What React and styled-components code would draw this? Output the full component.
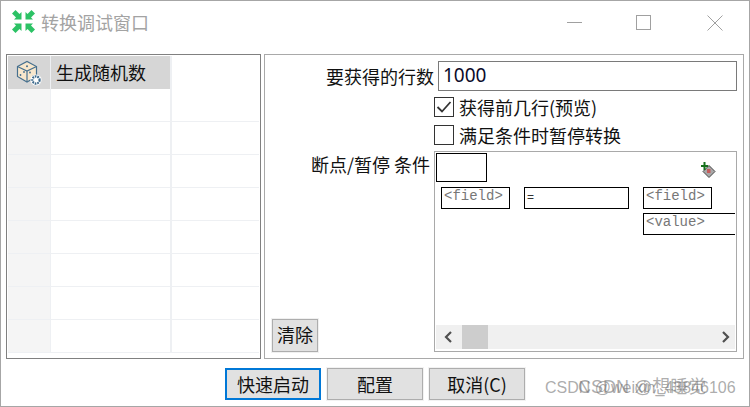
import styled, { createGlobalStyle } from "styled-components";

const CJK = `"Noto Sans CJK SC", "Noto Sans", sans-serif`;

const GlobalStyle = createGlobalStyle`
  html, body {
    margin: 0;
    padding: 0;
    background: #fff;
  }
  * {
    box-sizing: border-box;
  }
`;

const Window = styled.div`
  position: relative;
  width: 750px;
  height: 407px;
  border: 1px solid #a6a6a6;
  background: #fff;
  overflow: hidden;
  font-family: ${CJK};
  font-size: 18px;
  color: #111;
`;

const TitleBar = styled.div`
  height: 53px;
  display: flex;
  align-items: flex-start;
  padding: 8px 20px 0 10px;
`;

const TitleText = styled.div`
  margin-left: 5px;
  line-height: 27px;
  color: #a3a3a3;
  flex: 1;
`;

const WinButtons = styled.div`
  display: flex;
  gap: 53px;
  padding-top: 6px;
  margin-right: 6px;
`;

const Body = styled.div`
  display: flex;
  gap: 3px;
  padding-left: 5px;
`;

const LeftPanel = styled.div`
  width: 255px;
  height: 305px;
  border: 1px solid #808080;
  padding: 1px;
  overflow: hidden;
`;

const StepRow = styled.div`
  display: grid;
  grid-template-columns: 42px 1px 119px 2px 1fr;
  height: 33px;
  border-bottom: 1px solid #eef0f3;
`;

const Cell = styled.div`
  background: ${(p) => p.$bg || "#fff"};
  display: flex;
  align-items: center;
  justify-content: center;
  line-height: 32px;
`;

const NameCell = styled(Cell)`
  justify-content: flex-start;
  padding: 0 0 2px 5px;
`;

const ColLine = styled.div`
  background: #eef0f3;
`;

const RightPanel = styled.div`
  width: 480px;
  height: 305px;
  border: 1px solid #a9a9a9;
  display: grid;
  grid-template-columns: 169px 303px;
  grid-template-rows: 36px 28px 26px 1fr;
  padding: 6px 0 6px 0;
`;

const RowLabel = styled.div`
  text-align: right;
  line-height: 31px;
`;

const RowsInput = styled.div`
  height: 30px;
  width: 299px;
  margin-left: 4px;
  border: 1px solid #7a7a7a;
  font-family: "Noto Sans", sans-serif;
  font-size: 19px;
  line-height: 27px;
  padding-left: 4px;
  color: #0b0b2a;
`;

const CheckRow = styled.div`
  grid-column: 2;
  display: flex;
  align-items: flex-start;
  gap: 5px;
  line-height: 20px;
  height: 20px;
`;

const CheckBox = styled.div`
  width: 20px;
  height: 20px;
  border: 1px solid #333;
  display: flex;
  align-items: center;
  justify-content: center;
`;

const ConditionSide = styled.div`
  display: flex;
  flex-direction: column;
  justify-content: space-between;
  padding-left: 7px;
  height: 201px;
`;

const ConditionLabel = styled(RowLabel)`
  padding-right: 4px;
  line-height: 27px;
`;

const ClearButton = styled.div`
  width: 46px;
  height: 33px;
  background: #e1e1e1;
  border: 1px solid #adadad;
  outline: 1px solid #f0f0f0;
  text-align: center;
  line-height: 29px;
`;

const ConditionPanel = styled.div`
  width: 303px;
  height: 201px;
  border: 1px solid #a9a9a9;
  display: flex;
  flex-direction: column;
  padding: 1px 1px 2px;
  overflow: hidden;
`;

const ConditionTop = styled.div`
  display: flex;
  justify-content: space-between;
  align-items: flex-start;
  padding-right: 19px;
`;

const NameBox = styled.div`
  width: 51px;
  height: 29px;
  border: 1px solid #000;
`;

const AddIcon = styled.div`
  margin-top: 4px;
`;

const ConditionGrid = styled.div`
  display: grid;
  grid-template-columns: 69px 105px 92px;
  column-gap: 14px;
  row-gap: 4px;
  padding: 4px 0 0 5px;
  flex: 1;
  align-content: start;
`;

const FieldBox = styled.div`
  grid-column: ${(p) => p.$col || "auto"};
  height: 22px;
  border: 1px solid #000;
  border-right: ${(p) => (p.$open ? "0" : "1px solid #000")};
  width: ${(p) => p.$w || "auto"};
  font-family: "Liberation Mono", monospace;
  font-size: 14px;
  line-height: 17px;
  padding-left: 2px;
  color: #777;
  white-space: pre;
`;

const OpBox = styled(FieldBox)`
  color: #333;
  font-family: "Liberation Sans", sans-serif;
  font-size: 12px;
  line-height: 18px;
`;

const HScroll = styled.div`
  height: 24px;
  background: #f0f0f0;
  display: flex;
  align-items: center;
  justify-content: space-between;
  position: relative;
  padding: 0 5px 0 8px;
`;

const Thumb = styled.div`
  position: absolute;
  left: 26px;
  top: 0;
  width: 26px;
  height: 24px;
  background: #cdcdcd;
`;

const Footer = styled.div`
  display: flex;
  gap: 6px;
  padding: 9px 0 0 224px;
`;

const ActionButton = styled.div`
  width: 96px;
  height: 32px;
  background: #e1e1e1;
  border: ${(p) => (p.$primary ? "2px solid #0078d7" : "1px solid #adadad")};
  outline: ${(p) => (p.$primary ? "0" : "1px solid #f2f2f2")};
  text-align: center;
  line-height: ${(p) => (p.$primary ? "28px" : "30px")};
`;

const Watermark = styled.div`
  position: absolute;
  top: ${(p) => p.$top}px;
  left: ${(p) => p.$left}px;
  font-family: "Liberation Sans", ${CJK};
  font-size: ${(p) => p.$size}px;
  line-height: 22px;
  color: rgba(120, 120, 120, 0.62);
  white-space: nowrap;
`;

const CloseSvg = styled.svg`
  margin-left: 2px;
`;

const ArrowsIcon = () => (
  <svg width="25" height="25" viewBox="0 0 25 25" fill="#2cc265">
    <path d="M1 4.5 L4.5 1 L8.5 5 L10.5 3 L10.5 10.5 L3 10.5 L5 8.5 Z" />
    <path d="M24 4.5 L20.5 1 L16.5 5 L14.5 3 L14.5 10.5 L22 10.5 L20 8.5 Z" />
    <path d="M1 20.5 L4.5 24 L8.5 20 L10.5 22 L10.5 14.5 L3 14.5 L5 16.5 Z" />
    <path d="M24 20.5 L20.5 24 L16.5 20 L14.5 22 L14.5 14.5 L22 14.5 L20 16.5 Z" />
  </svg>
);

const MinIcon = () => (
  <svg width="16" height="16" viewBox="0 0 16 16">
    <path d="M0 7.5 H15" stroke="#a0a0a0" fill="none" />
  </svg>
);

const MaxIcon = () => (
  <svg width="16" height="16" viewBox="0 0 16 16">
    <rect x="0.5" y="0.5" width="14" height="14" stroke="#a0a0a0" fill="none" />
  </svg>
);

const CloseIcon = () => (
  <CloseSvg width="16" height="16" viewBox="0 0 16 16">
    <path d="M0.5 0.5 L15.5 15.5 M15.5 0.5 L0.5 15.5" stroke="#a0a0a0" fill="none" />
  </CloseSvg>
);

const DiceIcon = () => (
  <svg width="26" height="26" viewBox="0 0 26 26">
    <path d="M1.5 6.5 L11 1.5 L20.5 6.5 L20.5 16.5 L11 22 L1.5 16.5 Z" fill="#f8e7cc" stroke="#46708f" strokeWidth="1.2" />
    <path d="M1.5 6.5 L11 11 L20.5 6.5 M11 11 L11 22" fill="none" stroke="#46708f" strokeWidth="1.2" />
    <circle cx="11" cy="6.2" r="1" fill="#46708f" />
    <circle cx="4.5" cy="15" r="0.9" fill="#46708f" />
    <circle cx="8" cy="12" r="0.9" fill="#46708f" />
    <circle cx="14" cy="12.5" r="0.9" fill="#46708f" />
    <circle cx="17.5" cy="16" r="0.9" fill="#46708f" />
    <circle cx="20" cy="20" r="5.6" fill="#fff" />
    <circle cx="20" cy="20" r="3.6" fill="#fff" stroke="#3d6a8c" strokeWidth="2.2" strokeDasharray="1.7 0.85" />
  </svg>
);

const AddConditionIcon = () => (
  <svg width="16" height="16" viewBox="0 0 16 16">
    <path d="M9 3.5 L15 9.5 L9 15.5 L3 9.5 Z" fill="#a8a8a8" stroke="#444" />
    <path d="M4.5 0 V8 M1 4 H8" stroke="#16701c" strokeWidth="2" fill="none" />
    <path d="M7 8 H10.5 M7 10 H10.5" stroke="#e01010" strokeWidth="1" />
  </svg>
);

const CheckMark = () => (
  <svg width="16" height="14" viewBox="0 0 16 14">
    <path d="M1.5 7 L6 11.5 L14.5 2" stroke="#333" strokeWidth="1.8" fill="none" />
  </svg>
);

const ScrollArrow = ({ d }) => (
  <svg width="10" height="12" viewBox="0 0 10 12">
    <path d={d} stroke="#505050" strokeWidth="2.2" fill="none" />
  </svg>
);

const rows = [0, 1, 2, 3, 4, 5, 6, 7, 8];

export default function App() {
  return (
    <>
      <GlobalStyle />
      <Window>
        <TitleBar>
          <ArrowsIcon />
          <TitleText>转换调试窗口</TitleText>
          <WinButtons>
            <MinIcon />
            <MaxIcon />
            <CloseIcon />
          </WinButtons>
        </TitleBar>
        <Body>
          <LeftPanel>
            {rows.map((r) => (
              <StepRow key={r}>
                <Cell $bg={r === 0 ? "#d6d6d6" : "#f5f5f5"}>{r === 0 && <DiceIcon />}</Cell>
                <ColLine />
                <NameCell $bg={r === 0 ? "#d6d6d6" : "#fff"}>{r === 0 && "生成随机数"}</NameCell>
                <ColLine />
                <Cell />
              </StepRow>
            ))}
          </LeftPanel>
          <RightPanel>
            <RowLabel>要获得的行数</RowLabel>
            <RowsInput>1000</RowsInput>
            <CheckRow>
              <CheckBox>
                <CheckMark />
              </CheckBox>
              获得前几行(预览)
            </CheckRow>
            <CheckRow>
              <CheckBox />
              满足条件时暂停转换
            </CheckRow>
            <ConditionSide>
              <ConditionLabel>断点/暂停 条件</ConditionLabel>
              <ClearButton>清除</ClearButton>
            </ConditionSide>
            <ConditionPanel>
              <ConditionTop>
                <NameBox />
                <AddIcon>
                  <AddConditionIcon />
                </AddIcon>
              </ConditionTop>
              <ConditionGrid>
                <FieldBox>{"<field>"}</FieldBox>
                <OpBox>=</OpBox>
                <FieldBox $w="69px">{"<field>"}</FieldBox>
                <FieldBox $col="3" $open>
                  {"<value>"}
                </FieldBox>
              </ConditionGrid>
              <HScroll>
                <Thumb />
                <ScrollArrow d="M7 1 L2 6 L7 11" />
                <ScrollArrow d="M3 1 L8 6 L3 11" />
              </HScroll>
            </ConditionPanel>
          </RightPanel>
        </Body>
        <Footer>
          <ActionButton $primary>快速启动</ActionButton>
          <ActionButton>配置</ActionButton>
          <ActionButton>取消(C)</ActionButton>
        </Footer>
        <Watermark $top={376} $left={544} $size={16}>CSDN @weixin_43846106</Watermark>
        <Watermark $top={375} $left={577} $size={18}>CSDN @想睡觉</Watermark>
      </Window>
    </>
  );
}
